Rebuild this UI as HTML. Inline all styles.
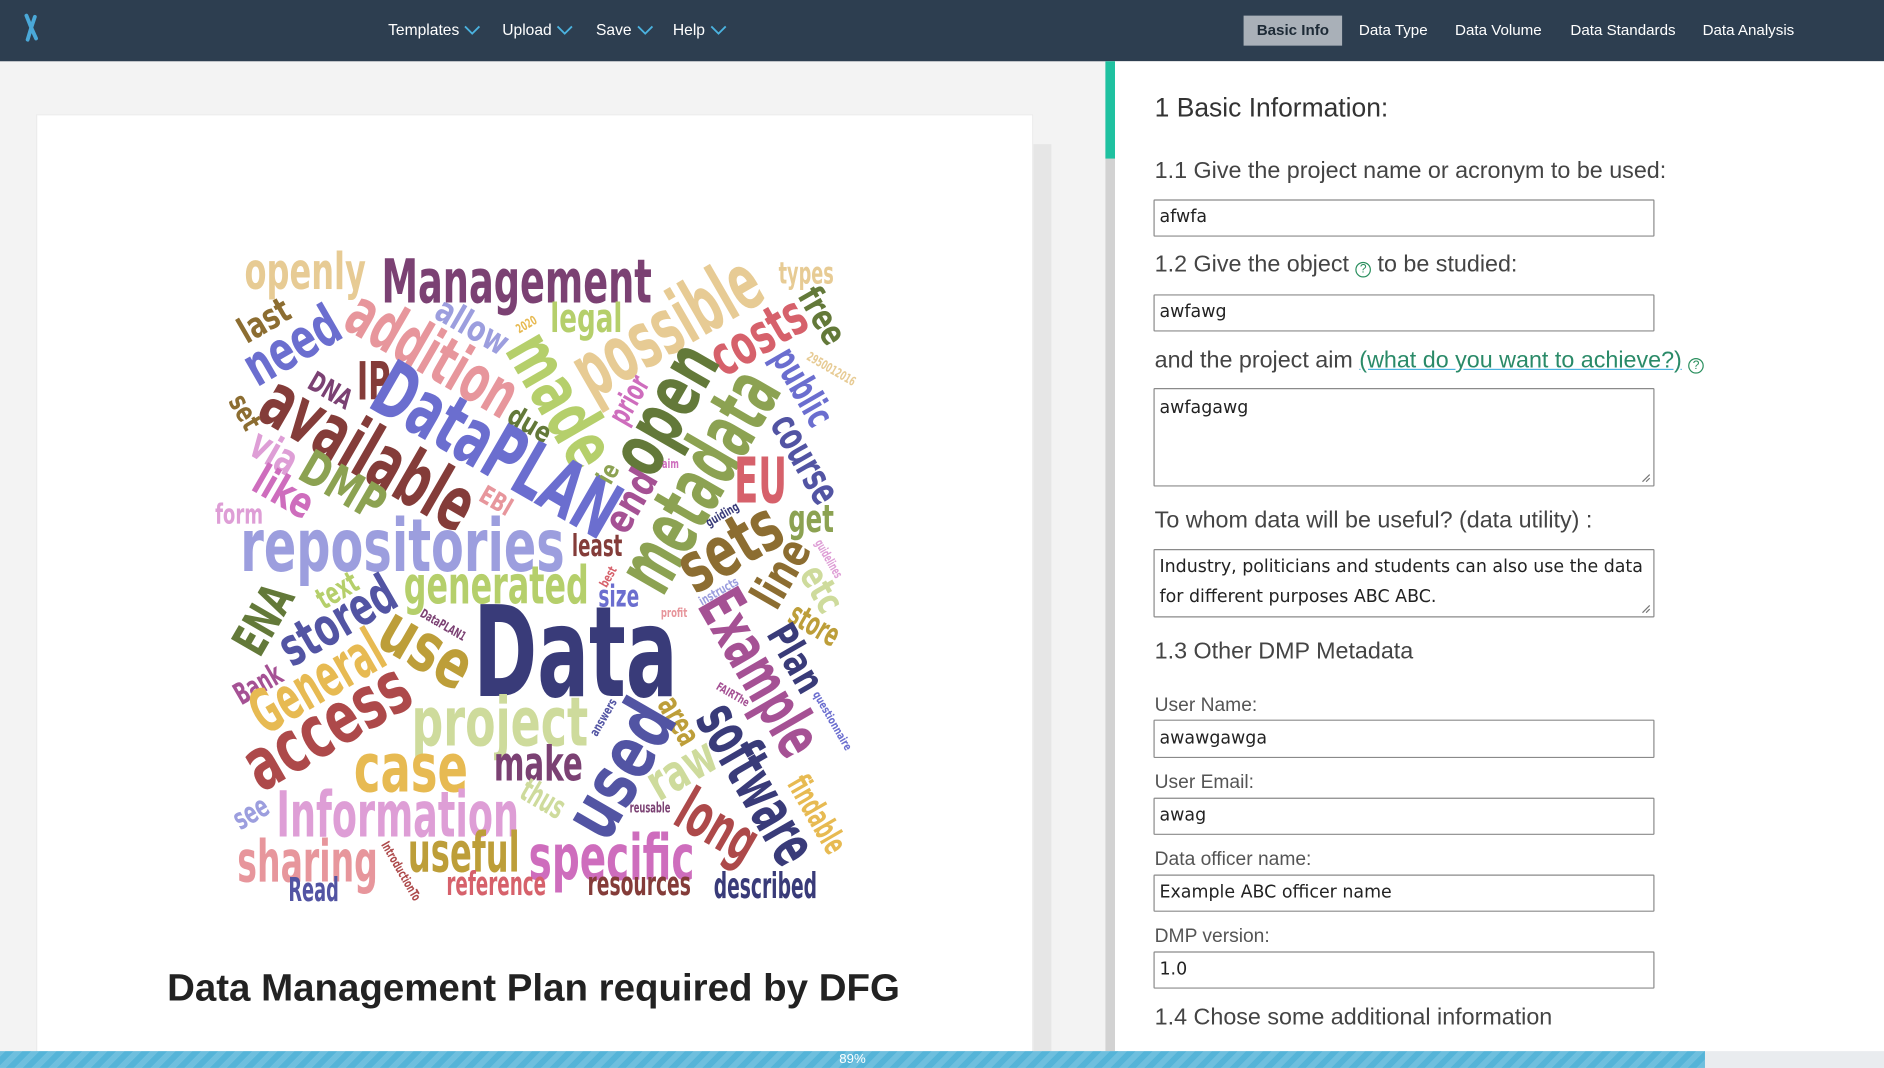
<!DOCTYPE html>
<html><head><meta charset="utf-8">
<style>
html,body{margin:0;padding:0;width:1884px;height:1068px;overflow:hidden;background:#f3f3f3;}
#root{position:absolute;left:0;top:0;width:1568px;height:889px;overflow:hidden;transform:scale(1.20153,1.2013);transform-origin:0 0;font-family:"Liberation Sans",sans-serif;}
.nav{position:absolute;left:0;top:0;width:1568px;height:51px;background:#2d3e50;}
.menu{position:absolute;top:17px;color:#fff;font-size:13px;}
.menu svg{vertical-align:middle;margin-left:4px}
.tab{position:absolute;top:13px;height:25px;line-height:25px;color:#fff;font-size:12.6px;}
.card{position:absolute;left:30px;top:95px;width:828px;height:780px;background:#fff;border:1px solid #ececec;}
.sb{position:absolute;left:860px;top:120px;width:15px;height:755px;background:#e6e6e6;}
.right{position:absolute;left:928px;top:51px;width:640px;height:838px;background:#fff;}
.t{position:absolute;left:961px;color:#333;white-space:nowrap;}
.inp{position:absolute;left:960px;width:417px;border:1px solid #8a8a8a;border-radius:1px;background:#fff;color:#222;box-sizing:border-box;padding:0 4px;font-family:"DejaVu Sans","Liberation Sans",sans-serif;font-size:14.5px;}
.q{display:inline-block;width:13px;height:13px;border:1.3px solid #2a8f5e;border-radius:50%;color:#2a8f5e;font-size:10px;text-align:center;vertical-align:-1px;box-sizing:border-box;line-height:11px;}
.grip{position:absolute;right:2px;bottom:2px}
</style></head><body><div id="root">
<div class="nav">
 <svg style="position:absolute;left:18px;top:11px" width="16" height="24" viewBox="0 0 16 24"><path d="M4 2 L8 12 L5 22 M11 3 L8 12 L12 21" stroke="#4aa8d8" stroke-width="3.2" fill="none" stroke-linecap="round"/></svg>
 <div class="menu" style="left:323px">Templates<svg width="14" height="9"><path d="M1 1 L7 7 L13 1" stroke="#4bb3e0" stroke-width="1.5" fill="none"/></svg></div>
 <div class="menu" style="left:418px">Upload<svg width="14" height="9"><path d="M1 1 L7 7 L13 1" stroke="#4bb3e0" stroke-width="1.5" fill="none"/></svg></div>
 <div class="menu" style="left:496px">Save<svg width="14" height="9"><path d="M1 1 L7 7 L13 1" stroke="#4bb3e0" stroke-width="1.5" fill="none"/></svg></div>
 <div class="menu" style="left:560px">Help<svg width="14" height="9"><path d="M1 1 L7 7 L13 1" stroke="#4bb3e0" stroke-width="1.5" fill="none"/></svg></div>
 <div class="tab" style="left:1035px;width:82px;background:#a9b0b8;color:#1d2a36;font-weight:bold;text-align:center">Basic Info</div>
 <div class="tab" style="left:1131px">Data Type</div>
 <div class="tab" style="left:1211px">Data Volume</div>
 <div class="tab" style="left:1307px">Data Standards</div>
 <div class="tab" style="left:1417px">Data Analysis</div>
</div>
<div class="card"></div>
<div class="sb"></div>
<svg style="position:absolute;left:0;top:0" width="860" height="889" font-family="'Liberation Sans Narrow','DejaVu Sans Condensed','Liberation Sans',sans-serif" font-weight="bold" text-anchor="middle" dominant-baseline="central">
<g id="wc"></g>
</svg>
<div style="position:absolute;left:30px;width:828px;top:804px;text-align:center;font-size:32px;font-weight:bold;color:#222">Data Management Plan required by DFG</div>
<div style="position:absolute;left:920px;top:51px;width:8px;height:838px;background:#d2d2d2"></div>
<div style="position:absolute;left:920px;top:51px;width:8px;height:81px;background:#1fc1a0"></div>
<div class="right"></div>
<div class="t" style="top:77px;font-size:22px">1 Basic Information:</div>
<div class="t" style="top:131px;font-size:19.4px;color:#444">1.1 Give the project name or acronym to be used:</div>
<div class="inp" style="top:166px;height:31px;line-height:29px">afwfa</div>
<div class="t" style="top:209px;font-size:19.4px;color:#444">1.2 Give the object <span class="q">?</span> to be studied:</div>
<div class="inp" style="top:245px;height:31px;line-height:29px">awfawg</div>
<div class="t" style="top:289px;font-size:19.4px;color:#444">and the project aim <span style="color:#2a8a68;text-decoration:underline;text-decoration-color:#4bb3e0">(what do you want to achieve?)</span> <span class="q">?</span></div>
<div class="inp" style="top:323px;height:82px;line-height:32px">awfagawg<svg class="grip" width="8" height="8"><path d="M7 1 L1 7 M7 4 L4 7" stroke="#777"/></svg></div>
<div class="t" style="top:422px;font-size:19.4px;color:#444">To whom data will be useful? (data utility) :</div>
<div class="inp" style="top:457px;height:57px;line-height:25px;padding-top:2px">Industry, politicians and students can also use the data for different purposes ABC ABC.<svg class="grip" width="8" height="8"><path d="M7 1 L1 7 M7 4 L4 7" stroke="#777"/></svg></div>
<div class="t" style="top:531px;font-size:19.4px;color:#444">1.3 Other DMP Metadata</div>
<div class="t" style="top:579px;font-size:16px;color:#555">User Name:</div>
<div class="inp" style="top:599px;height:32px;line-height:30px">awawgawga</div>
<div class="t" style="top:643px;font-size:16px;color:#555">User Email:</div>
<div class="inp" style="top:664px;height:31px;line-height:29px">awag</div>
<div class="t" style="top:707px;font-size:16px;color:#555">Data officer name:</div>
<div class="inp" style="top:728px;height:31px;line-height:29px">Example ABC officer name</div>
<div class="t" style="top:771px;font-size:16px;color:#555">DMP version:</div>
<div class="inp" style="top:792px;height:31px;line-height:29px">1.0</div>
<div class="t" style="top:836px;font-size:19.4px;color:#444">1.4 Chose some additional information</div>
<div style="position:absolute;left:0;top:875px;width:1568px;height:14px;background:#e9ecef"></div>
<div style="position:absolute;left:0;top:875px;width:1419px;height:14px;background:#55b4d8;background-image:repeating-linear-gradient(-45deg,rgba(255,255,255,.15) 0 5px,transparent 5px 10px);color:#fff;font-size:11px;line-height:14px;text-align:center">89%</div>
</div>
<script>
var W=[["openly",254,226,0,101,40,"#e7cb94"],["Management",430,235,0,225,48,"#7b4173"],["types",671,228,0,46,24,"#e7cb94"],["free",684,263,60,50,28,"#637939"],["last",220,267,-30,45,28,"#8c6d31"],["need",243,288,-30,85,44,"#6b6ecf"],["addition",360,295,30,155,52,"#e7969c"],["allow",393,272,30,65,28,"#9c9ede"],["2020",438,270,-30,18,10,"#e7ba52"],["legal",488,265,0,60,32,"#b5cf6b"],["possible",555,272,-30,170,62,"#e7cb94"],["costs",631,280,-30,85,44,"#d6616b"],["public",668,322,60,70,30,"#6b6ecf"],["2950012016",692,307,30,45,10,"#e7cb94"],["IP",311,318,0,28,42,"#843c39"],["made",467,333,60,120,56,"#b5cf6b"],["DataPLAN",413,375,30,225,62,"#6b6ecf"],["available",307,377,30,195,60,"#843c39"],["DNA",275,325,30,38,22,"#7b4173"],["set",204,343,60,30,22,"#8c6d31"],["due",441,353,30,38,22,"#637939"],["prior",524,333,-60,42,24,"#ce6dbd"],["open",553,340,-60,115,60,"#637939"],["metadata",582,400,-60,200,64,"#8ca252"],["EU",633,400,0,44,50,"#d6616b"],["course",670,382,60,80,32,"#5254a3"],["via",228,377,30,40,34,"#de9ed6"],["like",236,410,30,52,34,"#ce6dbd"],["DMP",285,405,30,75,38,"#8ca252"],["EBI",413,417,30,28,20,"#e7969c"],["ie",506,394,-60,16,20,"#8ca252"],["aim",558,386,0,14,10,"#ce6dbd"],["end",525,417,-60,55,32,"#a55194"],["form",199,428,0,40,22,"#de9ed6"],["get",675,432,0,38,30,"#8ca252"],["guiding",601,428,-30,30,10,"#393b79"],["repositories",335,455,0,270,58,"#9c9ede"],["least",497,455,0,42,24,"#843c39"],["sets",607,455,-30,90,56,"#8c6d31"],["line",650,477,-60,60,36,"#8c6d31"],["etc",684,490,60,40,30,"#cedb9c"],["guidelines",690,465,60,35,10,"#de9ed6"],["generated",413,488,0,154,42,"#b5cf6b"],["text",281,492,-30,36,24,"#b5cf6b"],["ENA",220,516,-60,60,38,"#637939"],["stored",281,517,-30,105,42,"#5254a3"],["size",515,497,0,34,24,"#6b6ecf"],["best",506,480,-60,18,10,"#d6616b"],["instructs",598,492,-30,36,10,"#9c9ede"],["profit",561,510,0,22,10,"#e7969c"],["Example",633,560,60,150,50,"#a55194"],["store",678,520,30,44,26,"#bd9e39"],["DataPLAN1",369,520,30,42,10,"#7b4173"],["use",355,540,30,80,54,"#bd9e39"],["Data",479,543,0,170,100,"#393b79"],["Plan",662,548,60,60,32,"#393b79"],["Bank",215,570,-30,42,24,"#a55194"],["General",264,568,-30,120,48,"#e7ba52"],["access",272,605,-30,150,58,"#ad494a"],["FAIRThe",610,578,30,30,9,"#a55194"],["questionnaire",693,600,60,55,9,"#6b6ecf"],["project",416,602,0,147,54,"#cedb9c"],["answers",502,597,-60,34,10,"#5254a3"],["area",565,600,60,42,26,"#bd9e39"],["used",516,640,-60,120,60,"#5254a3"],["software",630,652,60,145,50,"#393b79"],["raw",567,640,-30,60,40,"#cedb9c"],["case",342,640,0,95,54,"#e7ba52"],["make",448,637,0,74,38,"#7b4173"],["thus",452,665,30,38,26,"#cedb9c"],["see",209,677,-30,30,24,"#9c9ede"],["Information",331,678,0,202,50,"#de9ed6"],["reusable",541,673,0,34,11,"#7b4173"],["long",597,688,30,70,48,"#ad494a"],["findable",680,678,60,70,26,"#e7ba52"],["sharing",256,717,0,117,46,"#e7969c"],["IntroductionTo",334,725,60,55,10,"#ad494a"],["useful",386,710,0,93,44,"#bd9e39"],["specific",509,714,0,138,50,"#ce6dbd"],["Read",261,741,0,42,26,"#5254a3"],["reference",413,736,0,83,26,"#d6616b"],["resources",532,736,0,86,26,"#843c39"],["described",637,738,0,86,28,"#393b79"]];
var g=document.getElementById("wc"),ns="http://www.w3.org/2000/svg";
W.forEach(function(w){var t=document.createElementNS(ns,"text");t.setAttribute("x",w[1]);t.setAttribute("y",w[2]);t.setAttribute("font-size",w[5]*1.05);t.setAttribute("fill",w[6]);t.setAttribute("textLength",w[4]);t.setAttribute("lengthAdjust","spacingAndGlyphs");if(w[3])t.setAttribute("transform","rotate("+w[3]+" "+w[1]+" "+w[2]+")");t.textContent=w[0];g.appendChild(t);});
</script>
</body></html>
